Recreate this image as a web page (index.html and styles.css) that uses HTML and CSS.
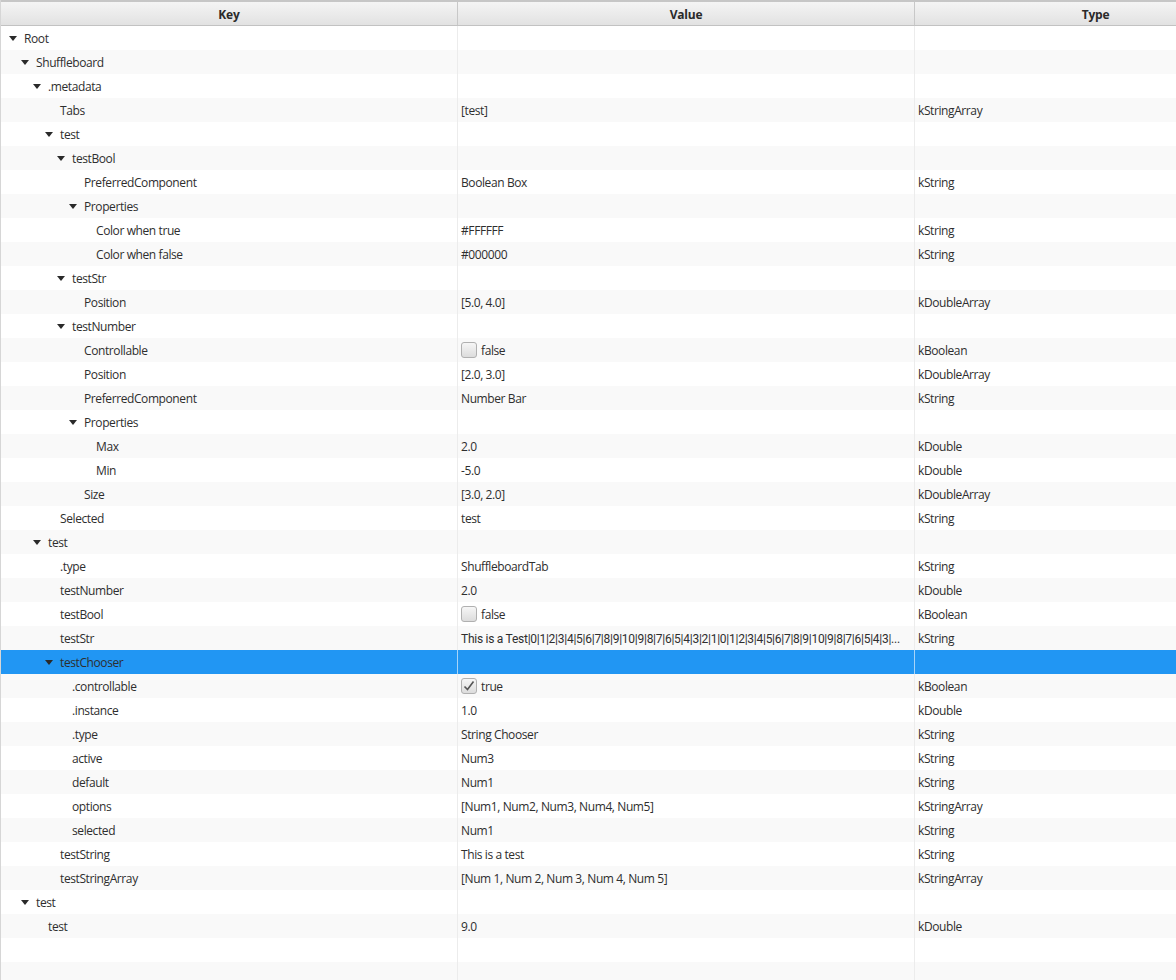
FILE: index.html
```html
<!DOCTYPE html>
<html>
<head>
<meta charset="utf-8">
<link rel="stylesheet" href="styles.css">
</head>
<body>
<div class="table">
  <div class="header">
    <div class="hcell c1">Key</div>
    <div class="hcell c2">Value</div>
    <div class="hcell c3">Type</div>
  </div>
  <div class="rows">
    <div class="row"><div class="cell c1 l0"><span class="arrow"></span><span class="key">Root</span></div><div class="cell c2"></div><div class="cell c3"></div></div>
    <div class="row"><div class="cell c1 l1"><span class="arrow"></span><span class="key">Shuffleboard</span></div><div class="cell c2"></div><div class="cell c3"></div></div>
    <div class="row"><div class="cell c1 l2"><span class="arrow"></span><span class="key">.metadata</span></div><div class="cell c2"></div><div class="cell c3"></div></div>
    <div class="row"><div class="cell c1 l3"><span class="leaf"></span><span class="key">Tabs</span></div><div class="cell c2">[test]</div><div class="cell c3">kStringArray</div></div>
    <div class="row"><div class="cell c1 l3"><span class="arrow"></span><span class="key">test</span></div><div class="cell c2"></div><div class="cell c3"></div></div>
    <div class="row"><div class="cell c1 l4"><span class="arrow"></span><span class="key">testBool</span></div><div class="cell c2"></div><div class="cell c3"></div></div>
    <div class="row"><div class="cell c1 l5"><span class="leaf"></span><span class="key">PreferredComponent</span></div><div class="cell c2">Boolean Box</div><div class="cell c3">kString</div></div>
    <div class="row"><div class="cell c1 l5"><span class="arrow"></span><span class="key">Properties</span></div><div class="cell c2"></div><div class="cell c3"></div></div>
    <div class="row"><div class="cell c1 l6"><span class="leaf"></span><span class="key">Color when true</span></div><div class="cell c2">#FFFFFF</div><div class="cell c3">kString</div></div>
    <div class="row"><div class="cell c1 l6"><span class="leaf"></span><span class="key">Color when false</span></div><div class="cell c2">#000000</div><div class="cell c3">kString</div></div>
    <div class="row"><div class="cell c1 l4"><span class="arrow"></span><span class="key">testStr</span></div><div class="cell c2"></div><div class="cell c3"></div></div>
    <div class="row"><div class="cell c1 l5"><span class="leaf"></span><span class="key">Position</span></div><div class="cell c2">[5.0, 4.0]</div><div class="cell c3">kDoubleArray</div></div>
    <div class="row"><div class="cell c1 l4"><span class="arrow"></span><span class="key">testNumber</span></div><div class="cell c2"></div><div class="cell c3"></div></div>
    <div class="row"><div class="cell c1 l5"><span class="leaf"></span><span class="key">Controllable</span></div><div class="cell c2"><span class="check"></span>false</div><div class="cell c3">kBoolean</div></div>
    <div class="row"><div class="cell c1 l5"><span class="leaf"></span><span class="key">Position</span></div><div class="cell c2">[2.0, 3.0]</div><div class="cell c3">kDoubleArray</div></div>
    <div class="row"><div class="cell c1 l5"><span class="leaf"></span><span class="key">PreferredComponent</span></div><div class="cell c2">Number Bar</div><div class="cell c3">kString</div></div>
    <div class="row"><div class="cell c1 l5"><span class="arrow"></span><span class="key">Properties</span></div><div class="cell c2"></div><div class="cell c3"></div></div>
    <div class="row"><div class="cell c1 l6"><span class="leaf"></span><span class="key">Max</span></div><div class="cell c2">2.0</div><div class="cell c3">kDouble</div></div>
    <div class="row"><div class="cell c1 l6"><span class="leaf"></span><span class="key">Min</span></div><div class="cell c2">-5.0</div><div class="cell c3">kDouble</div></div>
    <div class="row"><div class="cell c1 l5"><span class="leaf"></span><span class="key">Size</span></div><div class="cell c2">[3.0, 2.0]</div><div class="cell c3">kDoubleArray</div></div>
    <div class="row"><div class="cell c1 l3"><span class="leaf"></span><span class="key">Selected</span></div><div class="cell c2">test</div><div class="cell c3">kString</div></div>
    <div class="row"><div class="cell c1 l2"><span class="arrow"></span><span class="key">test</span></div><div class="cell c2"></div><div class="cell c3"></div></div>
    <div class="row"><div class="cell c1 l3"><span class="leaf"></span><span class="key">.type</span></div><div class="cell c2">ShuffleboardTab</div><div class="cell c3">kString</div></div>
    <div class="row"><div class="cell c1 l3"><span class="leaf"></span><span class="key">testNumber</span></div><div class="cell c2">2.0</div><div class="cell c3">kDouble</div></div>
    <div class="row"><div class="cell c1 l3"><span class="leaf"></span><span class="key">testBool</span></div><div class="cell c2"><span class="check"></span>false</div><div class="cell c3">kBoolean</div></div>
    <div class="row"><div class="cell c1 l3"><span class="leaf"></span><span class="key">testStr</span></div><div class="cell c2"><span class="longtext">This is a Test|0|1|2|3|4|5|6|7|8|9|10|9|8|7|6|5|4|3|2|1|0|1|2|3|4|5|6|7|8|9|10|9|8|7|6|5|4|3|...</span></div><div class="cell c3">kString</div></div>
    <div class="row selected"><div class="cell c1 l3"><span class="arrow"></span><span class="key">testChooser</span></div><div class="cell c2"></div><div class="cell c3"></div></div>
    <div class="row"><div class="cell c1 l4"><span class="leaf"></span><span class="key">.controllable</span></div><div class="cell c2"><span class="check checked"><svg width="12" height="12" viewBox="0 0 12 12"><path d="M1.5 6.5 L4.5 9.5 L10.5 1.5" fill="none" stroke="#555" stroke-width="1.6"/></svg></span>true</div><div class="cell c3">kBoolean</div></div>
    <div class="row"><div class="cell c1 l4"><span class="leaf"></span><span class="key">.instance</span></div><div class="cell c2">1.0</div><div class="cell c3">kDouble</div></div>
    <div class="row"><div class="cell c1 l4"><span class="leaf"></span><span class="key">.type</span></div><div class="cell c2">String Chooser</div><div class="cell c3">kString</div></div>
    <div class="row"><div class="cell c1 l4"><span class="leaf"></span><span class="key">active</span></div><div class="cell c2">Num3</div><div class="cell c3">kString</div></div>
    <div class="row"><div class="cell c1 l4"><span class="leaf"></span><span class="key">default</span></div><div class="cell c2">Num1</div><div class="cell c3">kString</div></div>
    <div class="row"><div class="cell c1 l4"><span class="leaf"></span><span class="key">options</span></div><div class="cell c2">[Num1, Num2, Num3, Num4, Num5]</div><div class="cell c3">kStringArray</div></div>
    <div class="row"><div class="cell c1 l4"><span class="leaf"></span><span class="key">selected</span></div><div class="cell c2">Num1</div><div class="cell c3">kString</div></div>
    <div class="row"><div class="cell c1 l3"><span class="leaf"></span><span class="key">testString</span></div><div class="cell c2">This is a test</div><div class="cell c3">kString</div></div>
    <div class="row"><div class="cell c1 l3"><span class="leaf"></span><span class="key">testStringArray</span></div><div class="cell c2">[Num 1, Num 2, Num 3, Num 4, Num 5]</div><div class="cell c3">kStringArray</div></div>
    <div class="row"><div class="cell c1 l1"><span class="arrow"></span><span class="key">test</span></div><div class="cell c2"></div><div class="cell c3"></div></div>
    <div class="row"><div class="cell c1 l2"><span class="leaf"></span><span class="key">test</span></div><div class="cell c2">9.0</div><div class="cell c3">kDouble</div></div>
    <div class="row"><div class="cell c1"></div><div class="cell c2"></div><div class="cell c3"></div></div>
    <div class="row"><div class="cell c1"></div><div class="cell c2"></div><div class="cell c3"></div></div>
  </div>
</div>
</body>
</html>
```

FILE: styles.css
```css
html, body {
  margin: 0;
  padding: 0;
  background: #ffffff;
  overflow: hidden;
}
body {
  font-family: "Open Sans", "Noto Sans", sans-serif;
  font-size: 12px;
  letter-spacing: -0.4px;
  color: #2e2e2e;
}
.table {
  width: 1176px;
  height: 980px;
  overflow: hidden;
  border-left: 1px solid #d6d6d6;
  box-sizing: border-box;
}
.header {
  display: flex;
  height: 26px;
  width: max-content;
  box-sizing: border-box;
  border-top: 2px solid #c6c6c6;
  border-bottom: 1px solid #c2c2c2;
  background: linear-gradient(#f4f4f4, #e2e2e2);
}
.hcell {
  box-sizing: border-box;
  font-weight: bold;
  text-align: center;
  line-height: 25px;
  color: #2a2a2a;
  letter-spacing: -0.2px;
  border-right: 1px solid #c8c8c8;
}
.c1 { width: 457px; flex: none; }
.c2 { width: 457px; flex: none; }
.c3 { width: 362px; flex: none; }
.rows { display: flex; flex-direction: column; width: max-content; }
.row {
  display: flex;
  height: 24px;
  flex: none;
  background: #ffffff;
}
.row:nth-child(even) { background: #f9f9f9; }
.row.selected { background: #2196f3; }
.cell {
  box-sizing: border-box;
  height: 24px;
  padding-top: 1px;
  border-right: 1px solid #ececec;
  white-space: nowrap;
  overflow: hidden;
  display: flex;
  align-items: center;
}
.cell.c3 { padding-left: 3px; }
.cell.c2 { padding-left: 3px; padding-right: 2px; }
.row.selected .cell { border-right-color: #a8d4f8; }
.cell.c1 { padding-left: 0; }
.cell.l1 { padding-left: 12px; }
.cell.l2 { padding-left: 24px; }
.cell.l3 { padding-left: 36px; }
.cell.l4 { padding-left: 48px; }
.cell.l5 { padding-left: 60px; }
.cell.l6 { padding-left: 72px; }
.arrow, .leaf {
  flex: none;
  width: 23px;
  height: 23px;
  position: relative;
}
.arrow::after {
  content: "";
  position: absolute;
  left: 8px;
  top: 9px;
  width: 0;
  height: 0;
  border-left: 4px solid transparent;
  border-right: 4px solid transparent;
  border-top: 5px solid #2a2a2a;
}
.longtext {
  font-family: Roboto, "Open Sans", sans-serif;
  letter-spacing: -0.26px;
  white-space: nowrap;
}
.check {
  flex: none;
  width: 16px;
  height: 16px;
  box-sizing: border-box;
  margin-right: 4px;
  margin-top: -1px;
  border: 1px solid #b0b0b0;
  border-radius: 3px;
  background: linear-gradient(#f6f6f6, #dcdcdc);
  display: flex;
  align-items: center;
  justify-content: center;
}
```
